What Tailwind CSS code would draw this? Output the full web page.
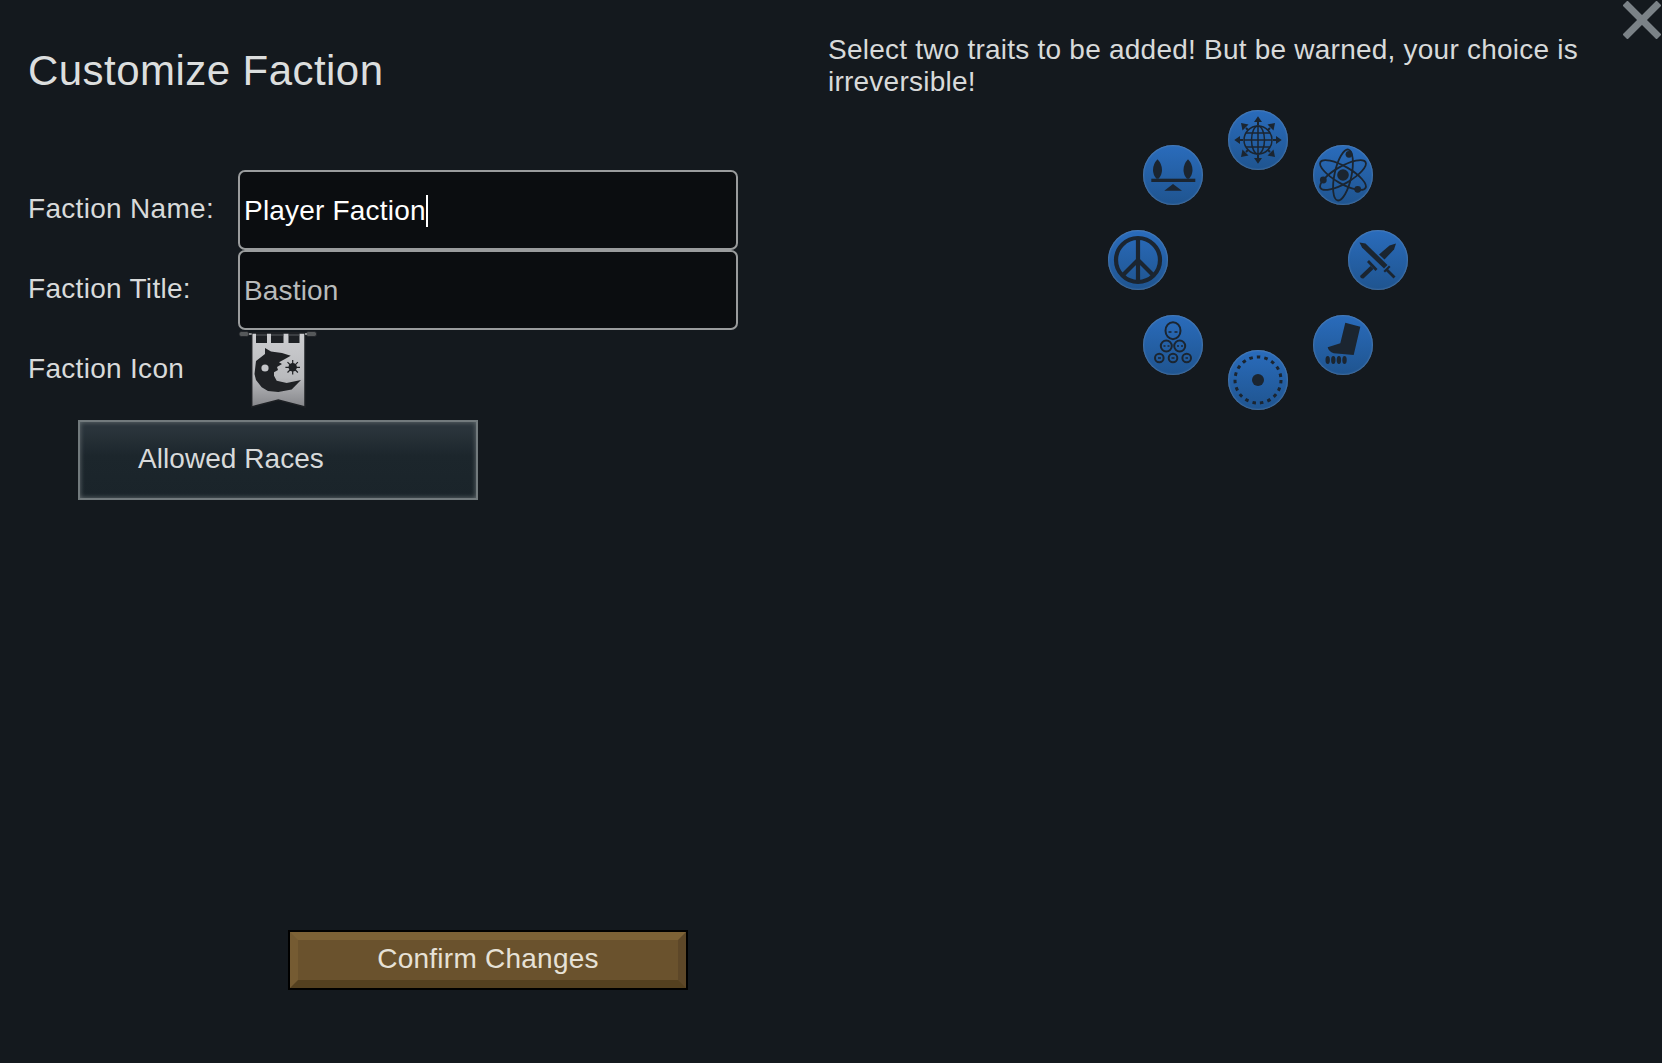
<!DOCTYPE html>
<html lang="en">
<head>
  <meta charset="UTF-8" />
  <title>Customize Faction</title>
  <script src="https://cdn.jsdelivr.net/npm/@tailwindcss/browser@4"></script>
</head>
<body class="bg-[#14191e] w-[1662px] h-[1063px] overflow-hidden font-['Liberation_Sans',sans-serif] text-[#d8dada] relative">
  <!-- close -->
  <svg class="absolute left-[1623px] top-[1px] w-[38px] h-[38px]" viewBox="0 0 38 38">
    <path d="M2 2 L36 36 M36 2 L2 36" stroke="#7b8287" stroke-width="7" fill="none" />
  </svg>

  <div class="flex h-full">
    <!-- left column -->
    <div class="w-[828px] flex flex-col">
      <h1 class="pl-[28px] pt-[47px] h-[170px] text-[42px] leading-[48px] tracking-[0.45px] text-[#dcdede]">Customize Faction</h1>

      <div class="flex items-center h-[80px] pl-[28px]">
        <span class="w-[210px] text-[28px] tracking-[0.3px] -mt-[2px]">Faction Name:</span>
        <div class="w-[500px] h-[80px] rounded-[7px] border-2 border-[#9a9c9d] bg-[#0b0d10] flex items-center pl-[4px] pt-[2px] text-[28px] tracking-[0.2px] text-white">
          Player Faction<span class="w-[2px] h-[32px] bg-white"></span>
        </div>
      </div>
      <div class="flex items-center h-[80px] pl-[28px]">
        <span class="w-[210px] text-[28px] tracking-[0.3px] -mt-[3px]">Faction Title:</span>
        <div class="w-[500px] h-[80px] rounded-[7px] border-2 border-[#9a9c9d] bg-[#0b0d10] flex items-center pl-[4px] pt-[2px] text-[28px] tracking-[0.15px] text-[#b9bbbb]">Bastion</div>
      </div>
      <div class="flex items-center h-[80px] pl-[28px]">
        <span class="w-[210px] text-[28px] tracking-[0.3px] -mt-[2px]">Faction Icon</span>
        <svg class="w-[84px] h-[82px]" viewBox="0 0 84 82">
          <defs>
            <linearGradient id="cloth" x1="0" y1="0" x2="0" y2="1">
              <stop offset="0" stop-color="#cdced1" />
              <stop offset="0.6" stop-color="#b9babd" />
              <stop offset="1" stop-color="#85868a" />
            </linearGradient>
          </defs>
          <path d="M13.700 4 H67 V78 L40.300 71 L13.700 78 Z" fill="url(#cloth)" stroke="#1d2024" stroke-width="1.500" />
          <rect x="1" y="2.500" width="10" height="5" rx="2.500" fill="#55585a" stroke="#1d2024" stroke-width="0.800" />
          <rect x="68" y="2.500" width="10.700" height="5" rx="2.500" fill="#55585a" stroke="#1d2024" stroke-width="0.800" />
          <path d="M11 5 H13.700 M67 5 H69" stroke="#8b8e90" stroke-width="2" />
          <rect x="18" y="3" width="11" height="11" fill="#1d2024" />
          <rect x="33" y="3" width="12.500" height="11" fill="#1d2024" />
          <rect x="50.500" y="3" width="11" height="11" fill="#1d2024" />
          <path d="M18 6 H29 M33 6 H45.500 M50.500 6 H61.500" stroke="#5a5d60" stroke-width="1" />
          <path d="M27 19 L33 22.500 L44 24 L52.700 26.700 L47 30 L41 33.300 L44 35 L39 38 L40 41 L36 43.300 L36 46.700 L38.700 51.700 L48.700 54 L63 51 L53.700 60.500 L40.300 63 L30 62 L23.700 58.300 L18 51 L16.500 45 L18 32 L27 25 Z" fill="#1f2124" />
          <circle cx="27" cy="39" r="3.600" fill="#c4c5c8" />
          <circle cx="54.700" cy="38.300" r="4.200" fill="#1f2124" />
          <path d="M54.700 31 V45.600 M47.400 38.300 H62 M49.500 33.100 L59.900 43.500 M59.900 33.100 L49.500 43.500" stroke="#1f2124" stroke-width="1.200" />
        </svg>
      </div>

      <div class="ml-[78px] mt-[10px] w-[400px] h-[80px] border-2 border-[#727a7d] shadow-[inset_0_0_5px_#687074] bg-linear-to-b from-[#2a343b] from-10% via-[#1c262c] via-45% to-[#1a242a] flex items-center pl-[58px] text-[28px] tracking-[0.05px]">
        <span class="-mt-[3px]">Allowed Races</span>
      </div>

      <div class="ml-[288px] mt-[430px] w-[400px] h-[60px] border-2 border-black">
        <div class="h-full border-[8px] border-t-[#7d6236] border-l-[#755b32] border-r-[#5d4728] border-b-[#54401f] bg-[#6a522d] flex items-center justify-center text-[28px] text-[#e6e1d6] tracking-[0.25px]">
          <span class="-mt-[2px]">Confirm Changes</span>
        </div>
      </div>
    </div>

    <!-- right column -->
    <div class="flex-1 pt-[34px] pr-[60px]">
      <p class="text-[28px] leading-[32px] tracking-[0.23px]">Select two traits to be added! But be warned, your choice is irreversible!</p>
    </div>
  </div>

  <!-- trait ring -->
  <div class="absolute left-[1228px] top-[110px] w-[60px] h-[60px] rounded-full bg-linear-to-b from-[#2a6cbc] to-[#1f548f] shadow-[inset_0_0_2px_#7b9cc0]">
    <svg viewBox="0 0 60 60" class="w-full h-full" fill="#1b2530" stroke="#1b2530">
      <g fill="none" stroke-width="1.500">
        <circle cx="30" cy="30" r="14" />
        <ellipse cx="30" cy="30" rx="6.500" ry="14" />
        <path d="M30 16 V44 M16 30 H44 M18 23 H42 M18 37 H42" />
      </g>
      <path stroke-width="2" d="M30 11 V15 M30 49 V45 M11 30 H15 M49 30 H45 M18 18 L20 20 M42 18 L40 20 M18 42 L20 40 M42 42 L40 40" />
      <g stroke="none">
        <path d="M30 6.300 L34 12 H26 Z M30 53.700 L34 48 H26 Z M6.300 30 L12 26 V34 Z M53.700 30 L48 26 V34 Z" />
        <path d="M13 13 L20.500 14.500 L14.500 20.500 Z M47 13 L39.500 14.500 L45.500 20.500 Z M13 47 L20.500 45.500 L14.500 39.500 Z M47 47 L39.500 45.500 L45.500 39.500 Z" />
      </g>
    </svg>
  </div>
  <div class="absolute left-[1313px] top-[145px] w-[60px] h-[60px] rounded-full bg-linear-to-b from-[#2a6cbc] to-[#1f548f] shadow-[inset_0_0_2px_#7b9cc0]">
    <svg viewBox="0 0 60 60" class="w-full h-full" fill="#1b2530">
      <g fill="none" stroke="#1b2530" stroke-width="1.800">
        <ellipse cx="30" cy="30" rx="26" ry="8.500" transform="rotate(30 30 30)" />
        <ellipse cx="30" cy="30" rx="26" ry="8.500" transform="rotate(-30 30 30)" />
        <ellipse cx="30" cy="30" rx="26" ry="8.500" transform="rotate(-78 30 30)" />
      </g>
      <circle cx="30" cy="30" r="5.800" />
      <circle cx="36" cy="9.300" r="3.400" />
      <circle cx="10.300" cy="35" r="3.400" />
      <circle cx="44.700" cy="44.300" r="3.400" />
    </svg>
  </div>
  <div class="absolute left-[1348px] top-[230px] w-[60px] h-[60px] rounded-full bg-linear-to-b from-[#2a6cbc] to-[#1f548f] shadow-[inset_0_0_2px_#7b9cc0]">
    <svg viewBox="0 0 60 60" class="w-full h-full" fill="#1b2530">
      <!-- long sword -->
      <path d="M11.500 12.500 L17.500 13.500 L39.500 35 L36 38.500 L14 17.500 Z" />
      <path d="M35.500 41 L41 35.500 L42.500 37 L37 42.500 Z" />
      <path d="M39.500 38.500 L47.500 46.500 L45.500 48.500 L37.500 40.500 Z" />
      <!-- second sword, broken by the first -->
      <path d="M48 13.500 L46 19.500 L36.500 29.500 L31 24.500 L41.500 15.500 Z" />
      <path d="M19 32 L21 30 L29.500 39 L27.500 41 Z" />
      <path d="M22.500 36 L25.500 39 L15.500 48.500 Q12.500 49 12 46 Z" />
    </svg>
  </div>
  <div class="absolute left-[1313px] top-[315px] w-[60px] h-[60px] rounded-full bg-linear-to-b from-[#2a6cbc] to-[#1f548f] shadow-[inset_0_0_2px_#7b9cc0]">
    <svg viewBox="0 0 60 60" class="w-full h-full" fill="#1b2530">
      <path d="M32.300 7.700 L47.300 11.700 L40.700 40 L20.700 38.300 Q15.500 36.500 14.700 32.300 L27.300 28.300 Z" />
      <ellipse cx="14.700" cy="45" rx="2.200" ry="4" />
      <ellipse cx="20.300" cy="45" rx="2.200" ry="4" />
      <ellipse cx="25.900" cy="45" rx="2.200" ry="4" />
      <ellipse cx="31.500" cy="45" rx="2.200" ry="4" />
    </svg>
  </div>
  <div class="absolute left-[1228px] top-[350px] w-[60px] h-[60px] rounded-full bg-linear-to-b from-[#2a6cbc] to-[#1f548f] shadow-[inset_0_0_2px_#7b9cc0]">
    <svg viewBox="0 0 60 60" class="w-full h-full">
      <circle cx="30" cy="30" r="23" fill="none" stroke="#1b2530" stroke-width="3" stroke-dasharray="3.500 4.106" />
      <circle cx="30" cy="30" r="6" fill="#1b2530" />
    </svg>
  </div>
  <div class="absolute left-[1143px] top-[315px] w-[60px] h-[60px] rounded-full bg-linear-to-b from-[#2a6cbc] to-[#1f548f] shadow-[inset_0_0_2px_#7b9cc0]">
    <svg viewBox="0 0 60 60" class="w-full h-full" fill="none" stroke="#1b2530" stroke-width="2">
      <ellipse cx="30" cy="15.700" rx="7.500" ry="8.500" />
      <circle cx="23.300" cy="31" r="5.500" />
      <circle cx="36.700" cy="31" r="5.500" />
      <circle cx="16.300" cy="43" r="4.300" />
      <circle cx="30" cy="43" r="4.300" />
      <circle cx="43.700" cy="43" r="4.300" />
      <path d="M25.500 17 H28.500 M31.500 17 H34.500 M20.500 31 H22.500 M24.500 31 H26.500 M34 31 H36 M38 31 H40 M15 43 H18 M28.500 43 H31.500 M42.500 43 H45" stroke-width="1.500" />
    </svg>
  </div>
  <div class="absolute left-[1108px] top-[230px] w-[60px] h-[60px] rounded-full bg-linear-to-b from-[#2a6cbc] to-[#1f548f] shadow-[inset_0_0_2px_#7b9cc0]">
    <svg viewBox="0 0 60 60" class="w-full h-full" fill="none" stroke="#1b2530" stroke-width="4.200">
      <circle cx="30" cy="30" r="22" />
      <path d="M30 8 V52 M30 30 L14 46 M30 30 L46 46" />
    </svg>
  </div>
  <div class="absolute left-[1143px] top-[145px] w-[60px] h-[60px] rounded-full bg-linear-to-b from-[#2a6cbc] to-[#1f548f] shadow-[inset_0_0_2px_#7b9cc0]">
    <svg viewBox="0 0 60 60" class="w-full h-full" fill="#1b2530">
      <path d="M14.500 14.300 Q19 19 19 25 Q19 30 15.500 33.700 H13.500 Q10 30 10 25 Q10 19 14.500 14.300 Z" />
      <path d="M45 14.300 Q49.500 19 49.500 25 Q49.500 30 46 33.700 H44 Q40.500 30 40.500 25 Q40.500 19 45 14.300 Z" />
      <rect x="8.300" y="33.700" width="44" height="3.300" />
      <path d="M30 39 L39 45.700 H21.300 Z" />
    </svg>
  </div>
</body>
</html>
